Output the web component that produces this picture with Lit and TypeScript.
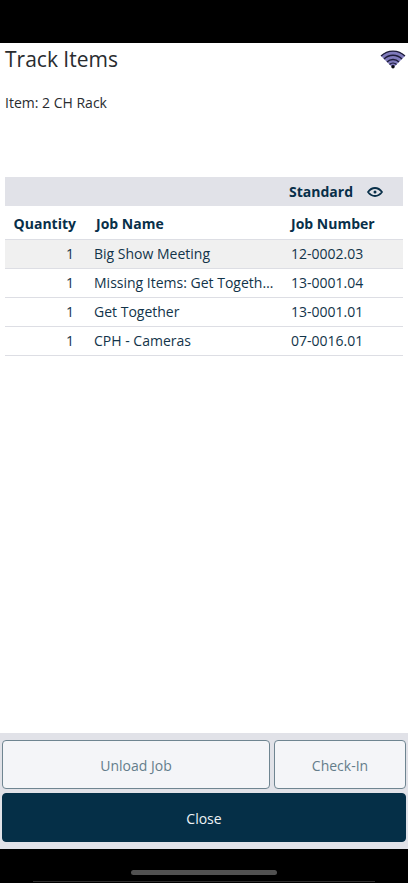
import { LitElement, html, css } from "lit";
import { customElement } from "lit/decorators.js";

interface Job {
  quantity: number;
  name: string;
  number: string;
}

const jobs: Job[] = [
  { quantity: 1, name: "Big Show Meeting", number: "12-0002.03" },
  { quantity: 1, name: "Missing Items: Get Together", number: "13-0001.04" },
  { quantity: 1, name: "Get Together", number: "13-0001.01" },
  { quantity: 1, name: "CPH - Cameras", number: "07-0016.01" },
];

@customElement("job-table")
class JobTable extends LitElement {
  static styles = css`
    :host {
      display: block;
      color: #12344a;
    }
    .toolbar {
      display: flex;
      justify-content: flex-end;
      height: 29px;
      padding-right: 19px;
      background: #e1e2e8;
    }
    .view {
      display: flex;
      align-items: center;
      gap: 13px;
      padding: 1px 0 0;
      border: 0;
      background: none;
      color: #082f49;
      font: bold 14px/20px "Open Sans", sans-serif;
    }
    .eye {
      width: 18px;
      height: 12px;
    }
    table {
      width: 100%;
      table-layout: fixed;
      border-collapse: separate;
      border-spacing: 0;
      font-size: 14px;
      line-height: 20px;
    }
    .quantity-col {
      width: 82px;
    }
    .number-col {
      width: 119px;
    }
    th,
    td {
      box-sizing: border-box;
      height: 29px;
      padding: 0 10px 0 7px;
      border-bottom: 1px solid #dddee4;
      text-align: left;
      white-space: nowrap;
      overflow: hidden;
      text-overflow: ellipsis;
    }
    th {
      height: 34px;
      padding: 2px 0 0 9px;
      color: #082f49;
      font-weight: bold;
    }
    .quantity {
      text-align: right;
      padding: 0 13px 0 0;
    }
    th.quantity {
      padding: 2px 11px 0 0;
    }
    th.number,
    td.number {
      padding-left: 7px;
      padding-right: 0;
    }
    .selected td {
      background: #f0f0f0;
    }
  `;

  render() {
    return html`
      <div class="toolbar">
        <button class="view" type="button">
          Standard
          <svg class="eye" viewBox="0 0 18 12" fill="none" stroke="currentColor" aria-hidden="true">
            <path d="M2 6Q5 2 9 2T16 6Q13 10 9 10T2 6Z" stroke-width="1.8" stroke-linejoin="round" />
            <circle cx="9" cy="6" r="1.5" fill="currentColor" stroke="none" />
          </svg>
        </button>
      </div>
      <table>
        <colgroup>
          <col class="quantity-col" />
          <col />
          <col class="number-col" />
        </colgroup>
        <thead>
          <tr>
            <th class="quantity" scope="col">Quantity</th>
            <th scope="col">Job Name</th>
            <th class="number" scope="col">Job Number</th>
          </tr>
        </thead>
        <tbody>
          ${jobs.map(
            (job, i) => html`
              <tr class=${i === 0 ? "selected" : ""}>
                <td class="quantity">${job.quantity}</td>
                <td>${job.name}</td>
                <td class="number">${job.number}</td>
              </tr>
            `
          )}
        </tbody>
      </table>
    `;
  }
}

@customElement("app-root")
class AppRoot extends LitElement {
  static styles = css`
    :host {
      display: flex;
      flex-direction: column;
      min-height: 100vh;
      background: #fff;
      color: #292c2f;
      font-family: "Open Sans", sans-serif;
      font-size: 14px;
      line-height: 20px;
    }
    .status {
      height: 43px;
      background: #000;
    }
    main {
      flex: 1;
      padding: 0 5px;
    }
    .heading {
      display: flex;
      justify-content: space-between;
      align-items: flex-start;
      margin-right: -3px;
    }
    h1 {
      margin: 2px 0 0;
      font-size: 21px;
      line-height: 28px;
      font-weight: 400;
    }
    .wifi {
      width: 26px;
      height: 22px;
      margin-top: 5px;
    }
    .item {
      margin: 20px 0 64px;
    }
    .actions {
      display: grid;
      grid-template-columns: 67fr 33fr;
      gap: 4px;
      padding: 7px 2px;
      background: #e1e2e8;
    }
    .action {
      box-sizing: border-box;
      height: 49px;
      padding: 2px 0 0;
      border: 1px solid #6f8591;
      border-radius: 4px;
      background: #f4f5f8;
      color: #647d8b;
      font: 14px/20px "Open Sans", sans-serif;
    }
    .close {
      grid-column: 1 / -1;
      border-color: #052f47;
      background: #052f47;
      color: #eef3f6;
    }
    .home {
      display: flex;
      flex-direction: column;
      align-items: center;
      justify-content: flex-end;
      gap: 6px;
      box-sizing: border-box;
      height: 34px;
      padding-bottom: 1px;
      background: #000;
    }
    .handle {
      width: 36%;
      height: 5px;
      border-radius: 3px;
      background: #515151;
    }
    .edge {
      width: 84%;
      height: 1px;
      background: #303030;
    }
  `;

  render() {
    return html`
      <div class="status"></div>
      <main>
        <header class="heading">
          <h1>Track Items</h1>
          <svg class="wifi" viewBox="0 0 26 22" role="img" aria-label="Wireless signal">
            <path d="M13 20L1 8A17 17 0 0 1 25 8Z" fill="#7f7abb" />
            <g fill="none" stroke="#1c1b38" stroke-width="1.3">
              <path d="M1 8A17 17 0 0 1 25 8" />
              <path d="M4 11A12.700 12.700 0 0 1 22 11" />
              <path d="M7 14A8.500 8.500 0 0 1 19 14" />
              <path d="M9.500 16.500A5 5 0 0 1 16.500 16.500" />
            </g>
            <circle cx="13" cy="18.700" r="1.700" fill="#08080f" />
          </svg>
        </header>
        <p class="item">Item: 2 CH Rack</p>
        <job-table></job-table>
      </main>
      <footer>
        <div class="actions">
          <button class="action" type="button">Unload Job</button>
          <button class="action" type="button">Check-In</button>
          <button class="action close" type="button">Close</button>
        </div>
        <div class="home">
          <div class="handle"></div>
          <div class="edge"></div>
        </div>
      </footer>
    `;
  }
}
